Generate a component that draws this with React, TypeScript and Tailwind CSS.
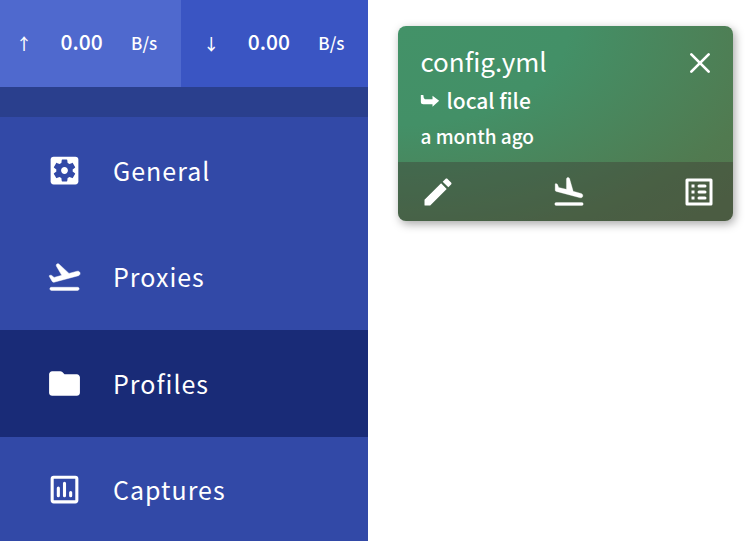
import React from "react";

const sans = "font-['Noto_Sans_CJK_SC','Noto_Sans',sans-serif]";

const takeoff =
  "M20.5 19h-17c-.55 0-1 .45-1 1s.45 1 1 1h17c.55 0 1-.45 1-1s-.45-1-1-1zm1.57-9.36c-.22-.8-1.04-1.27-1.84-1.06L14.92 10 8.46 3.98c-.27-.26-.66-.35-1.02-.25-.68.19-1 .97-.65 1.58l3.44 5.96-4.97 1.33-1.57-1.24c-.25-.19-.57-.26-.88-.18l-.33.09c-.32.08-.47.45-.3.73l1.88 3.25c.23.39.69.58 1.12.47L21 11.48c.8-.22 1.28-1.04 1.07-1.84z";
const landing =
  "M20.5 19h-17c-.55 0-1 .45-1 1s.45 1 1 1h17c.55 0 1-.45 1-1s-.45-1-1-1zM3.51 11.61l15.83 4.24c.8.21 1.62-.26 1.84-1.06.21-.8-.26-1.62-1.06-1.84l-5.31-1.42-2.44-8.53c-.1-.34-.38-.61-.73-.71-.68-.18-1.35.33-1.35 1.04v6.88L5.15 8.95l-.75-1.85c-.12-.29-.36-.51-.67-.59l-.33-.09c-.32-.09-.63.15-.63.48v3.75c0 .44.3.84.74.96z";
const folder =
  "M10.59 4.59C10.21 4.21 9.7 4 9.17 4H4c-1.1 0-1.99.9-1.99 2L2 18c0 1.1.9 2 2 2h16c1.1 0 2-.9 2-2V8c0-1.1-.9-2-2-2h-8l-1.41-1.41z";
const gear =
  "M19.14 12.94c.04-.3.06-.61.06-.94 0-.32-.02-.64-.07-.94l2.03-1.58c.18-.14.23-.41.12-.61l-1.92-3.32c-.12-.22-.37-.29-.59-.22l-2.39.96c-.5-.38-1.03-.7-1.62-.94l-.36-2.54c-.04-.24-.24-.41-.48-.41h-3.84c-.24 0-.43.17-.47.41l-.36 2.54c-.59.24-1.13.57-1.62.94l-2.39-.96c-.22-.08-.47 0-.59.22L2.74 8.87c-.12.21-.08.47.12.61l2.03 1.58c-.05.3-.09.63-.09.94s.02.64.07.94l-2.03 1.58c-.18.14-.23.41-.12.61l1.92 3.32c.12.22.37.29.59.22l2.39-.96c.5.38 1.03.7 1.62.94l.36 2.54c.05.24.24.41.48.41h3.84c.24 0 .44-.17.47-.41l.36-2.54c.59-.24 1.13-.56 1.62-.94l2.39.96c.22.08.47 0 .59-.22l1.92-3.32c.12-.22.07-.47-.12-.61l-2.01-1.58zM12 15c-1.65 0-3-1.35-3-3s1.35-3 3-3 3 1.35 3 3-1.35 3-3 3z";

function Icon({ className, children }: { className: string; children: React.ReactNode }) {
  return (
    <svg viewBox="0 0 24 24" fill="currentColor" aria-hidden="true" className={className}>
      {children}
    </svg>
  );
}

const items = [
  {
    label: "General",
    icon: (
      <>
        <rect x="3" y="3" width="18" height="18" rx="2" />
        <path d={gear} fill="#3249a7" transform="translate(3.12 3.12) scale(.74)" />
      </>
    ),
  },
  { label: "Proxies", icon: <path d={takeoff} stroke="currentColor" strokeWidth=".3" /> },
  { label: "Profiles", icon: <path d={folder} />, active: true },
  {
    label: "Captures",
    icon: (
      <g fill="none" stroke="currentColor" strokeWidth="2" strokeLinecap="round">
        <rect x="4" y="4" width="16" height="16" rx="1" />
        <path d="M8 11v5M12 8v8M16 14v2" />
      </g>
    ),
  },
];

function Rate({ arrow, label, className }: { arrow: string; label: string; className: string }) {
  return (
    <div aria-label={label} className={`flex flex-auto items-baseline justify-between font-medium ${className}`}>
      <span className="text-base">{arrow}</span>
      <span className="text-[21px]">0.00</span>
      <span className="text-[17px]">B/s</span>
    </div>
  );
}

export default function App() {
  return (
    <div className={`flex min-h-screen bg-white text-white ${sans}`}>
      <aside className="flex w-[49%] shrink-0 flex-col bg-[#3249a7]">
        <div className="flex h-[87px] bg-[#3a55c3] leading-[82px]">
          <Rate arrow="↑" label="Upload" className="bg-[#4f69ce] pr-6 pl-4" />
          <Rate arrow="↓" label="Download" className="pr-6 pl-[22px]" />
        </div>
        <div className="h-[30px] bg-[#2a3f8d]" />
        <nav className="grid h-[426px] grid-rows-4">
          {items.map((item) => (
            <a
              key={item.label}
              href={`#${item.label.toLowerCase()}`}
              className={`flex items-center gap-[30px] pl-[46px] text-[25px] tracking-[1px] ${
                item.active ? "bg-[#192b77]" : ""
              }`}
            >
              <Icon className="size-[37px]">{item.icon}</Icon>
              {item.label}
            </a>
          ))}
        </nav>
      </aside>
      <main className="min-w-0 flex-1 pt-[26px] pr-[19px] pl-[30px]">
        <article className="overflow-hidden rounded-lg bg-[radial-gradient(ellipse_at_top_left,#439268_0%,#439067_36%,#517a50_80%,#54744d_100%)] shadow-[2px_3px_10px_rgba(0,0,0,0.35)]">
          <div className="flex h-[136px] justify-between pt-[15px] pr-5 pl-[22px]">
            <div className="font-medium">
              <h2 className="text-[26px] leading-10 font-normal">config.yml</h2>
              <p className="flex items-center gap-1.5 text-[21px] leading-[38px]">
                <Icon className="size-5">
                  <path d="M1 6v8q0 3 3 3h11v3l8-7-8-6v4H6Q4 10 4 6Z" />
                </Icon>
                local file
              </p>
              <p className="text-[19px] leading-[34px]">a month ago</p>
            </div>
            <button aria-label="Remove profile" className="flex h-11 items-center">
              <Icon className="size-[26px]">
                <path d="M4 4l16 16M20 4L4 20" stroke="currentColor" strokeWidth="2.5" strokeLinecap="round" />
              </Icon>
            </button>
          </div>
          <div className="flex h-[59px] items-center justify-between bg-[#3d2e2d]/35 pr-4 pl-[22px]">
            <button aria-label="Edit profile">
              <Icon className="size-9">
                <path d="M3 17.2v3.4c0 .28.12.4.4.4h3.4L17.81 9.94l-3.75-3.75zM20.71 7.04c.39-.39.39-1.02 0-1.41l-2.34-2.34c-.39-.39-1.02-.39-1.41 0l-1.83 1.83 3.75 3.75 1.83-1.83z" />
              </Icon>
            </button>
            <button aria-label="Activate profile">
              <Icon className="size-9">
                <path d={landing} stroke="currentColor" strokeWidth=".2" />
              </Icon>
            </button>
            <button aria-label="View rules">
              <Icon className="size-9">
                <path
                  fillRule="evenodd"
                  d="M3 4q0-1 1-1h16q1 0 1 1v16q0 1-1 1H4q-1 0-1-1ZM5 5v14h14V5Z"
                />
                <path d="M7 7h2v2H7zM7 11h2v2H7zM7 15h2v2H7z" />
                <path d="M12 8h4M12 12h4M12 16h4" stroke="currentColor" strokeWidth="2" strokeLinecap="round" />
              </Icon>
            </button>
          </div>
        </article>
      </main>
    </div>
  );
}
